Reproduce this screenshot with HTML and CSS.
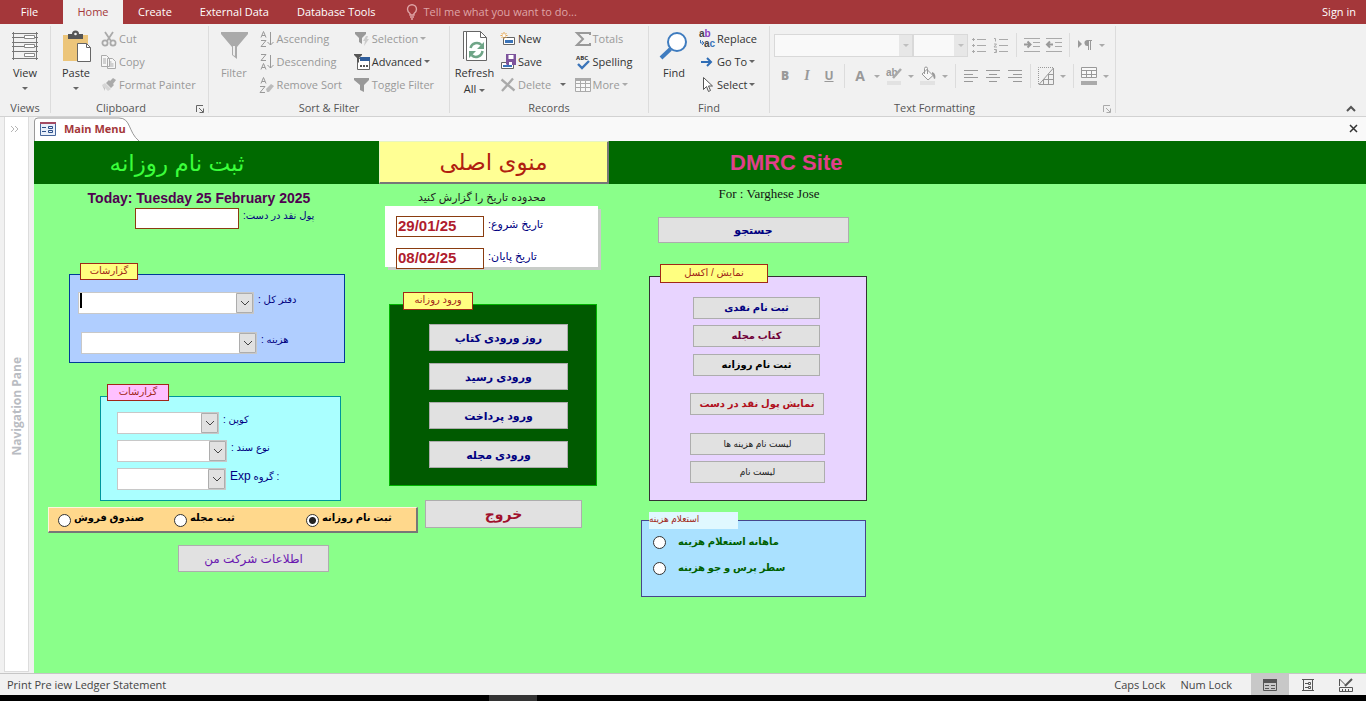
FILE: index.html
```
<!DOCTYPE html>
<html lang="en">
<head>
  <meta charset="UTF-8" />
  <meta name="viewport" content="width=device-width, initial-scale=1.0" />
  <title>Main Menu</title>
  <link rel="stylesheet" href="styles.css">
</head>
<body>
  <nav class="tabs">
    <button class="tab tab-file">File</button>
    <button class="tab active">Home</button>
    <button class="tab">Create</button>
    <button class="tab">External Data</button>
    <button class="tab">Database Tools</button>
    <button class="tab tell-me">
      <svg width="12" height="16" viewBox="0 0 12 16" fill="none" stroke="currentColor" stroke-width="1.4"><path d="M4 11V9.500C2.500 8.500 1.500 7.200 1.500 5.300a4.500 4.500 0 0 1 9 0c0 1.900-1 3.200-2.500 4.200V11zM4 13h4M5 15h2"/></svg>
      Tell me what you want to do...
    </button>
    <button class="tab sign-in">Sign in</button>
  </nav>

  <div class="ribbon">
    <section class="group views">
      <div class="group-body">
        <button class="big">
          <svg width="32" height="32" viewBox="0 0 32 32" fill="none" stroke="#777"><path d="M4.500 2v28M27.500 2v28M3 3.500h26M3 7.500h26M3 12.500h26M3 16.500h26M3 21.500h26M3 28.500h26"/><path fill="#fff" d="M15.500 5.500h10v3h-10zM15.500 14.500h10v3h-10zM15.500 23.500h10v3h-10z" stroke="#888"/></svg>
          <span>View</span><i class="arrow"></i>
        </button>
      </div>
      <h2>Views</h2>
    </section>

    <section class="group clipboard">
      <div class="group-body">
        <button class="big">
          <svg width="32" height="32" viewBox="0 0 32 32"><path fill="#ecc57a" d="M3 5h25v26H3z"/><path fill="#555" d="M8 4h4a3.500 3.500 0 0 1 7 0h4v5H8z"/><circle cx="15.500" cy="4" r="1.300" fill="#f1f1f1"/><path fill="#fff" stroke="#666" d="M17.500 13.500h9l4 4v14h-13z"/><path d="M26.500 13.500v4h4" fill="none" stroke="#666"/></svg>
          <span>Paste</span><i class="arrow"></i>
        </button>
        <div class="col">
          <button class="cmd" disabled><svg width="16" height="16" viewBox="0 0 16 16" fill="none" stroke="#aaa" stroke-width="1.800"><path d="M4 1l6 9M12 1L6 10"/><circle cx="4" cy="12" r="2.600"/><circle cx="12" cy="12" r="2.600"/></svg>Cut</button>
          <button class="cmd" disabled><svg width="16" height="16" viewBox="0 0 16 16" fill="#f6f6f6" stroke="#aaa"><path d="M.5 1.500h5l3 3v8h-8zM6.500 4.500h5l3 3v7h-8z"/><path d="M2 5h3M2 7h3M2 9h3M8.500 8h2M8.500 10h4M8.500 12h4"/></svg>Copy</button>
          <button class="cmd" disabled><svg width="16" height="16" viewBox="0 0 16 16"><path fill="#aaa" d="M12 1l3 2-3 4 1 1-3 3-5-5 3-3 1 1z"/><path fill="#d6d6d6" d="M4 6l6 6-3 2-6-6z"/><path fill="#c2c2c2" d="M1 8l3 3v3z"/></svg>Format Painter</button>
        </div>
      </div>
      <h2>Clipboard</h2>
      <button class="launcher" aria-label="Clipboard options"><svg width="8" height="8" viewBox="0 0 8 8" fill="none" stroke="currentColor"><path d="M.5 7V.5H7M3 3l4 4M7.500 3.500v4h-4"/></svg></button>
    </section>

    <section class="group sort">
      <div class="group-body">
        <button class="big" disabled>
          <svg width="32" height="32" viewBox="0 0 32 32"><path fill="#aaa" d="M3 2h27v2L19 17v12l-5-4v-8L3 4z"/><path fill="#eee" d="M15 16h2v10l-2-1z"/></svg>
          <span>Filter</span>
        </button>
        <div class="col">
          <button class="cmd" disabled><svg width="16" height="16" viewBox="0 0 16 16" fill="none" stroke="#999"><path d="M2 6.500L4.500.5 7 6.500M3 4.500h3M2 9.500h5l-5 6h5M11.500 1v13M8.500 11l3 3 3-3"/></svg>Ascending</button>
          <button class="cmd" disabled><svg width="16" height="16" viewBox="0 0 16 16" fill="none" stroke="#999"><path d="M2 .5h5l-5 6h5M2 15.500l2.500-6 2.500 6M3 13.500h3M11.500 1v13M8.500 11l3 3 3-3"/></svg>Descending</button>
          <button class="cmd" disabled><svg width="16" height="16" viewBox="0 0 16 16" fill="none" stroke="#999"><path d="M2 6.500L4.500.5 7 6.500M3 4.500h3M1 9.500h5l-5 6h5"/><path fill="#bbb" stroke="none" d="M7 12l5-5 3 2-5 6H8z"/></svg>Remove Sort</button>
        </div>
        <div class="col">
          <button class="cmd" disabled><svg width="16" height="16" viewBox="0 0 16 16"><path fill="#999" d="M1 1h11v2L8 7v6L5 11V7L1 3z"/><path fill="#ccc" d="M12 5L9 10h2l-1 5 5-7h-2l1-3z"/></svg>Selection<i class="arrow"></i></button>
          <button class="cmd"><svg width="16" height="16" viewBox="0 0 16 16"><path fill="#fff" stroke="#666" d="M3.500 4.500h12v11h-12z"/><path fill="#2f5d9b" d="M6 3h10v4H6z"/><path fill="#555" d="M0 0h8v1L5 4v5L3 7V4L0 1zM6 11h2v2H6zM9 11h2v2H9zM12 11h2v2h-2z"/></svg>Advanced<i class="arrow"></i></button>
          <button class="cmd" disabled><svg width="16" height="16" viewBox="0 0 16 16"><path fill="#999" d="M0 1h15v2l-5 5v7l-4-2V8L0 3z"/></svg>Toggle Filter</button>
        </div>
      </div>
      <h2>Sort &amp; Filter</h2>
    </section>

    <section class="group records">
      <div class="group-body">
        <button class="big">
          <svg width="32" height="32" viewBox="0 0 32 32" fill="#fff" stroke="#666"><path d="M4.500 29V1.500H18"/><path d="M7.500 1.500h14l6 6v23h-20z"/><path d="M21.500 1.500v6h6" fill="none"/><path d="M11.500 18a6.500 6.500 0 0 1 11-3M23.500 21a6.500 6.500 0 0 1-11 4" fill="none" stroke="#6fa587" stroke-width="2.500"/><path fill="#6fa587" stroke="none" d="M25 12v7h-7zM10 28v-7h7z"/></svg>
          <span>Refresh<br>All <i class="arrow"></i></span>
        </button>
        <div class="col">
          <button class="cmd"><svg width="16" height="16" viewBox="0 0 16 16"><path fill="#fff" stroke="#666" d="M3.500 6.500h11v7h-11z"/><path fill="#3b74b9" d="M5 9h8v3H5z"/><path stroke="#e8a54b" fill="none" d="M4 1v7M.5 4.500h7M1.500 2l5 5M6.500 2l-5 5"/><circle cx="4" cy="4.500" r="1.500" fill="#fff"/></svg>New</button>
          <button class="cmd"><svg width="16" height="16" viewBox="0 0 16 16"><path fill="#fff" stroke="#666" d="M1.500 8.500h12v6h-12z"/><path fill="#3b74b9" d="M3 11h9v2H3z"/><path fill="#7d549c" d="M6 0h10v11H7L6 10z"/><path fill="#fff" d="M8.500 1h5v4h-5zM9 8h3v3H9z"/></svg>Save</button>
          <button class="cmd" disabled><svg width="16" height="16" viewBox="0 0 16 16"><path fill="none" stroke="#aaa" stroke-width="2.300" d="M1.500 2.500l13 11M13 1.500L2 14"/></svg>Delete<i class="arrow dark"></i></button>
        </div>
        <div class="col">
          <button class="cmd" disabled><svg width="16" height="16" viewBox="0 0 16 16"><path fill="none" stroke="#999" stroke-width="2" d="M15 4V2H2l6 6-6 6h13v-2"/></svg>Totals</button>
          <button class="cmd"><svg width="16" height="16" viewBox="0 0 16 16"><text x="1" y="6" class="icon-abc">ABC</text><path fill="none" stroke="#3b74b9" stroke-width="2.400" d="M3 10l4 4 7-7"/></svg>Spelling</button>
          <button class="cmd" disabled><svg width="16" height="16" viewBox="0 0 16 16"><path fill="#f8f8f8" stroke="#aaa" d="M.5 1.500h15v13H.5zM.5 10.500h15M5.500 2v13M10.500 2v13M.5 6.500h15"/><path fill="#aaa" d="M0 1h16v3H0z"/></svg>More<i class="arrow"></i></button>
        </div>
      </div>
      <h2>Records</h2>
    </section>

    <section class="group find">
      <div class="group-body">
        <button class="big">
          <svg width="32" height="32" viewBox="0 0 32 32"><circle cx="19" cy="12" r="9" fill="#fff" stroke="#3f7cbf" stroke-width="2"/><path stroke="#3f7cbf" stroke-width="4" d="M12.500 19L3 28"/></svg>
          <span>Find</span>
        </button>
        <div class="col">
          <button class="cmd"><svg width="16" height="20" viewBox="0 0 16 20"><text x="0" y="8" class="icon-ab">a<tspan fill="#8a3fc0">b</tspan></text><text x="5" y="18" class="icon-ab">a<tspan fill="#3b74b9">c</tspan></text><path d="M1.500 11v3h3M3 12l2 2-2 2" fill="none" stroke="#3b74b9"/></svg>Replace</button>
          <button class="cmd"><svg width="16" height="16" viewBox="0 0 16 16"><path fill="none" stroke="#2f6db5" stroke-width="2" d="M2 8h10M8 4l4 4-4 4"/></svg>Go To<i class="arrow"></i></button>
          <button class="cmd"><svg width="16" height="16" viewBox="0 0 16 16"><path fill="#fff" stroke="#555" d="M4.500.5v12l3-3 2 5 2-1-2-4.500h4z"/></svg>Select<i class="arrow"></i></button>
        </div>
      </div>
      <h2>Find</h2>
    </section>

    <section class="group format">
      <div class="format-row">
        <select class="font-name" aria-label="Font" disabled></select>
        <select class="font-size" aria-label="Font size" disabled></select>
        <button class="tool" disabled aria-label="Bullets"><svg width="14" height="16" viewBox="0 0 14 16"><path d="M5 2.500h9M5 8.500h9M5 14.500h9M0 2.500h3M0 8.500h3M0 14.500h3" stroke="#aaa"/><path d="M1.500 1v3M1.500 7v3M1.500 13v3" stroke="#aaa"/></svg></button>
        <button class="tool" disabled aria-label="Numbering"><svg width="14" height="16" viewBox="0 0 14 16" fill="none" stroke="#aaa"><path d="M5 2.500h9M5 8.500h9M5 14.500h9M0 1.500h1.500v3M0 7h2.500L0 10h3M0 12.500h2.500v3H0M1 14h1.500"/></svg></button>
        <span class="sep"></span>
        <button class="tool" disabled aria-label="Increase indent"><svg width="16" height="16" viewBox="0 0 16 16" fill="none" stroke="#999"><path d="M0 1.500h16M9 5.500h7M9 9.500h7M0 14.500h16" stroke="#aaa"/><path stroke-width="2" d="M0 7.500h6M3.500 4.500l3 3-3 3"/></svg></button>
        <button class="tool" disabled aria-label="Decrease indent"><svg width="16" height="16" viewBox="0 0 16 16" fill="none" stroke="#999"><path d="M0 1.500h16M9 5.500h7M9 9.500h7M0 14.500h16" stroke="#aaa"/><path stroke-width="2" d="M1 7.500h6M4 4.500l-3 3 3 3"/></svg></button>
        <span class="sep"></span>
        <button class="tool" disabled aria-label="Text direction"><svg width="14" height="12" viewBox="0 0 14 12" fill="#999"><path d="M0 1l4 4-4 4zM9 1h5v1h-1v9h-1V2h-1v9h-1V7a3 3 0 0 1-1-6z"/></svg></button>
        <span class="drop"><i class="arrow"></i></span>
      </div>
      <div class="format-row">
        <button class="tool" disabled><b>B</b></button>
        <button class="tool italic" disabled>I</button>
        <button class="tool underline" disabled>U</button>
        <span class="sep"></span>
        <button class="tool font-colour" disabled>A</button>
        <span class="drop"><i class="arrow"></i></span>
        <button class="tool" disabled aria-label="Highlight"><svg width="16" height="20" viewBox="0 0 16 20"><text x="0" y="10" class="icon-hl">ab</text><path stroke="#aaa" stroke-width="2.500" d="M15 3l-8 9"/><path fill="#e2e2e2" d="M1 15h14v4H1z"/></svg></button>
        <span class="drop"><i class="arrow"></i></span>
        <button class="tool" disabled aria-label="Fill"><svg width="16" height="20" viewBox="0 0 16 20"><path fill="#f8f8f8" stroke="#999" d="M7 3.500l6 6-5 4.500-6-6zM4.500 8V2.500a1.500 1.500 0 0 1 3 0V8"/><path fill="#999" d="M12 6c3 1 4 4 3 7-2 0-1-3-3-5z"/><path fill="#e2e2e2" d="M0 15h15v4H0z"/></svg></button>
        <span class="drop"><i class="arrow"></i></span>
        <span class="sep"></span>
        <button class="tool" disabled aria-label="Align left"><svg width="14" height="14" viewBox="0 0 14 14" stroke="#999"><path d="M0 1.500h14M0 5.500h9M0 8.500h14M0 12.500h9"/></svg></button>
        <button class="tool" disabled aria-label="Centre"><svg width="14" height="14" viewBox="0 0 14 14" stroke="#999"><path d="M0 1.500h14M3 5.500h8M0 8.500h14M3 12.500h8"/></svg></button>
        <button class="tool" disabled aria-label="Align right"><svg width="14" height="14" viewBox="0 0 14 14" stroke="#999"><path d="M0 1.500h14M5 5.500h9M0 8.500h14M5 12.500h9"/></svg></button>
        <span class="sep"></span>
        <button class="tool" disabled aria-label="Gridlines"><svg width="16" height="18" viewBox="0 0 16 18" fill="none" stroke="#999"><path stroke-dasharray="1 1" d="M.5 17V.5H15"/><path d="M1 17.500h14.500V1zM5.500 12v5M10.500 7v10M6 12.500h9M10 7.500h5"/></svg></button>
        <span class="drop"><i class="arrow"></i></span>
        <span class="sep"></span>
        <button class="tool" disabled aria-label="Alternate row colour"><svg width="16" height="18" viewBox="0 0 16 18"><path fill="#f8f8f8" stroke="#999" d="M.5.5h15v10H.5zM.5 3.500h15M.5 7.500h15M5.500 3v8M10.500 3v8"/><path fill="#aaa" d="M0 14h16v4H0z"/></svg></button>
        <span class="drop"><i class="arrow"></i></span>
      </div>
      <h2>Text Formatting</h2>
      <button class="launcher" disabled aria-label="Text formatting options"><svg width="8" height="8" viewBox="0 0 8 8" fill="none" stroke="currentColor"><path d="M.5 7V.5H7M3 3l4 4M7.500 3.500v4h-4"/></svg></button>
    </section>
    <button class="collapse" aria-label="Collapse the ribbon"><svg width="10" height="7" viewBox="0 0 10 7"><path fill="none" stroke="#555" stroke-width="2" d="M1 6l4-4 4 4"/></svg></button>
  </div>

  <div class="workspace">
    <aside class="nav-pane">
      <button class="expand" aria-label="Open navigation pane"><svg width="9" height="8" viewBox="0 0 9 8"><path fill="none" stroke="#b5b5b5" d="M1 1l3 3-3 3M5 1l3 3-3 3"/></svg></button>
      <span class="nav-title">Navigation Pane</span>
    </aside>

    <div class="document">
      <div class="doc-tabs">
        <button class="doc-tab">
          <svg class="tab-shape" width="106" height="24" viewBox="0 0 106 24"><path fill="#fff" stroke="#999" d="M.5 24V4Q.5 1 4 1h81c12 0 9 14 20 23"/></svg>
          <svg class="form-icon" width="16" height="14" viewBox="0 0 16 14"><path fill="#e8effa" stroke="#47679b" d="M.5.500h15v13H.5z"/><path fill="#a34a63" d="M0 0h16v2H0z"/><path stroke="#2c5089" fill="none" d="M2 5.500h4M2 9.500h4M8.500 4.500h4v2h-4zM8.500 8.500h4v2h-4z"/></svg>
          <span>Main Menu</span>
        </button>
        <button class="doc-close" aria-label="Close"><svg width="9" height="9" viewBox="0 0 9 9"><path stroke="#333" stroke-width="1.500" d="M1 1l7 7M8 1L1 8"/></svg></button>
      </div>

      <main class="form">
        <header class="form-header">
          <h1 class="daily" lang="fa">ثبت نام روزانه</h1>
          <div class="main-title" lang="fa" dir="rtl">منوی اصلی</div>
          <div class="site">DMRC Site</div>
        </header>

        <div class="form-body">
          <div class="left-col">
            <p class="today">Today: Tuesday 25 February 2025</p>
            <div class="field cash">
              <input type="text" id="cash" class="box">
              <label for="cash" dir="rtl">پول نقد در دست:</label>
            </div>

            <fieldset class="panel ledger">
              <legend dir="rtl">گزارشات</legend>
              <div class="field">
                <select id="ledger" class="combo"></select>
                <span class="caret"></span>
                <label for="ledger" dir="rtl">دفتر کل :</label>
              </div>
              <div class="field">
                <select id="expense" class="combo"></select>
                <label for="expense" dir="rtl">هزینه :</label>
              </div>
            </fieldset>

            <fieldset class="panel vouchers">
              <legend dir="rtl">گزارشات</legend>
              <div class="field">
                <select id="coupon" class="combo coupon"></select>
                <label for="coupon" dir="rtl">کوپن :</label>
              </div>
              <div class="field">
                <select id="doc-type" class="combo doc-type"></select>
                <label for="doc-type" dir="rtl">نوع سند :</label>
              </div>
              <div class="field">
                <select id="exp-group" class="combo exp-group"></select>
                <label for="exp-group"><span class="latin">Exp</span> گروه :</label>
              </div>
            </fieldset>

            <div class="options">
              <label><input type="radio" name="book"><span>صندوق فروش</span></label>
              <label><input type="radio" name="book"><span>ثبت مجله</span></label>
              <label><input type="radio" name="book" checked><span>ثبت نام روزانه</span></label>
            </div>

            <button class="btn company" dir="rtl">اطلاعات شرکت من</button>
          </div>

          <div class="mid-col">
            <p class="range-title" dir="rtl">محدوده تاریخ را گزارش کنید</p>
            <div class="range">
              <div class="field">
                <input type="text" id="from" class="box" value="29/01/25">
                <label for="from" dir="rtl">تاریخ شروع:</label>
              </div>
              <div class="field">
                <input type="text" id="to" class="box" value="08/02/25">
                <label for="to" dir="rtl">تاریخ پایان:</label>
              </div>
            </div>

            <fieldset class="panel entry">
              <legend dir="rtl">ورود روزانه</legend>
              <button class="btn" dir="rtl">روز ورودی کتاب</button>
              <button class="btn" dir="rtl">ورودی رسید</button>
              <button class="btn" dir="rtl">ورود پرداخت</button>
              <button class="btn" dir="rtl">ورودی مجله</button>
            </fieldset>

            <button class="btn exit" dir="rtl">خروج</button>
          </div>

          <div class="right-col">
            <p class="owner">For : Varghese Jose</p>
            <button class="btn search" dir="rtl">جستجو</button>

            <fieldset class="panel excel">
              <legend dir="rtl">نمایش / اکسل</legend>
              <button class="btn" dir="rtl">ثبت نام نقدی</button>
              <button class="btn maroon" dir="rtl">کتاب مجله</button>
              <button class="btn black" dir="rtl">ثبت نام روزانه</button>
              <button class="btn red" dir="rtl">نمایش پول نقد در دست</button>
              <button class="btn plain wide" dir="rtl">لیست نام هزینه ها</button>
              <button class="btn plain" dir="rtl">لیست نام</button>
            </fieldset>

            <fieldset class="panel query">
              <legend dir="rtl">استعلام هزینه</legend>
              <label><input type="radio" name="query"><span dir="rtl">ماهانه استعلام هزینه</span></label>
              <label><input type="radio" name="query"><span dir="rtl">سطر پرس و جو هزینه</span></label>
            </fieldset>
          </div>
        </div>
      </main>
    </div>
  </div>

  <footer class="status">
    <span class="status-text">Print Pre iew Ledger Statement</span>
    <span>Caps Lock</span>
    <span>Num Lock</span>
    <div class="view-switch">
      <button class="active" aria-label="Form view"><svg width="14" height="12" viewBox="0 0 14 12"><path fill="none" stroke="#555" d="M.5.5h13v11H.5zM2 6.500h4M2 9.500h4M8 6.500h4M8 9.500h4"/><path fill="#555" d="M0 0h14v4H0z"/></svg></button>
      <button aria-label="Layout view"><svg width="12" height="14" viewBox="0 0 12 14" fill="none" stroke="#555"><path d="M1.500 1v12M10.500 1v12M0 1.500h12M0 12.500h12M3 5.500h3M3 9.500h3M6.500 4.500h2v2h-2zM6.500 8.500h2v2h-2z"/></svg></button>
      <button aria-label="Design view"><svg width="14" height="14" viewBox="0 0 14 14" fill="none" stroke="#555"><path d="M.5 8V1l6 6M.5 9.500h13v4H.5zM3.500 11v2M6.500 11v2M9.500 11v2"/><path stroke-width="2" d="M13 1L6 8"/></svg></button>
    </div>
  </footer>
  <div class="taskbar"><span></span></div>
</body>
</html>
```
FILE: styles.css
```
* {
  box-sizing: border-box;
}

body {
  margin: 0;
  height: 100vh;
  display: flex;
  flex-direction: column;
  overflow: hidden;
  font-family: "Open Sans", "DejaVu Sans", sans-serif;
  font-size: 11px;
  line-height: 16px;
  color: #333;
  background: #f1f1f1;
}

button {
  font: inherit;
  color: inherit;
  padding: 0;
  border: none;
  background: none;
}

svg {
  flex: none;
  overflow: visible;
}

h1,
h2,
p {
  margin: 0;
  font-weight: normal;
}

/* ribbon tabs */
.tabs {
  display: flex;
  height: 24px;
  background: #a4373a;
  color: #fff;
}

.tab {
  padding: 0 14px;
}

.tab-file {
  width: 63px;
  padding: 0 4px 0 0;
}

.tab.active {
  width: 60px;
  margin-right: 1px;
  padding: 0;
  background: #f1f1f1;
  color: #a4373a;
}

.tell-me {
  display: flex;
  align-items: center;
  gap: 5px;
  padding-left: 17px;
  color: #dfa5a7;
}

.sign-in {
  margin-left: auto;
  padding: 0 10px;
}

/* ribbon */
.ribbon {
  display: flex;
  height: 93px;
  border-bottom: 1px solid #d2d2d2;
}

.group {
  position: relative;
  display: flex;
  flex-direction: column;
  margin: 2px 0 3px;
  padding-top: 1px;
  border-right: 1px solid #dcdcdc;
}

.group h2 {
  margin-top: auto;
  font-size: 11px;
  line-height: 10px;
  text-align: center;
  color: #555;
}

.views {
  width: 51px;
}

.clipboard {
  width: 158px;
}

.clipboard h2 {
  padding-right: 17px;
}

.sort {
  width: 241px;
}

.records {
  width: 199px;
}

.find {
  width: 121px;
}

.format {
  width: 346px;
  padding: 7px 0 0 4px;
}

.group-body {
  display: flex;
  height: 69px;
}

.big {
  width: 50px;
  display: flex;
  flex-direction: column;
  align-items: center;
  padding-top: 3px;
}

.big span {
  margin-top: 3px;
  white-space: nowrap;
}

.big > .arrow {
  margin-top: 6px;
}

.col {
  display: flex;
  flex-direction: column;
}

.sort .col {
  width: 96px;
}

.records .col {
  width: 75px;
  margin-left: 1px;
}

.cmd {
  display: flex;
  align-items: center;
  gap: 2px;
  height: 23px;
  white-space: nowrap;
}

button:disabled {
  color: #999;
}

.arrow {
  display: inline-block;
  flex: none;
  border: 3px solid transparent;
  border-top-color: #666;
  border-bottom: none;
  vertical-align: middle;
}

:disabled .arrow,
.drop .arrow {
  border-top-color: #aaa;
}

:disabled .arrow.dark {
  margin-left: 7px;
  border-top-color: #666;
}

.launcher {
  position: absolute;
  right: 4px;
  bottom: 0;
  color: #666;
  line-height: 8px;
}

.launcher:disabled {
  color: #aaa;
}

.icon-abc {
  font: bold 6px "Open Sans", sans-serif;
  fill: #333;
}

.icon-ab {
  font: bold 10px "Liberation Sans", sans-serif;
  fill: #444;
}

.icon-hl {
  font: bold 10px "Liberation Sans", sans-serif;
  fill: #999;
}

.format-row {
  display: flex;
  align-items: center;
  height: 24px;
  margin-bottom: 7px;
}

.format h2 {
  padding-right: 20px;
}

.font-name,
.font-size {
  appearance: none;
  height: 23px;
  border: 1px solid #d0d0d0;
  border-radius: 0;
  background: #fdfdfd right / 13px 21px no-repeat;
  background-image: url("data:image/svg+xml,%3Csvg xmlns='http://www.w3.org/2000/svg' width='13' height='21'%3E%3Cpath fill='%23e3e3e3' d='M0 0h13v21H0z'/%3E%3Cpath fill='%23aaa' d='M4 9h6l-3 3z'/%3E%3C/svg%3E");
}

.font-name {
  width: 139px;
}

.font-size {
  width: 55px;
}

.tool {
  width: 22px;
  height: 22px;
  display: flex;
  align-items: center;
  justify-content: center;
  font-size: 12px;
  font-weight: bold;
}

.italic {
  font-family: "Liberation Serif", serif;
  font-size: 14px;
  font-style: italic;
}

.underline {
  text-decoration: underline;
}

.font-colour {
  font-size: 14px;
}

.drop {
  width: 12px;
  display: flex;
  justify-content: center;
}

.sep {
  width: 1px;
  height: 24px;
  margin: 0 4px;
  background: #dcdcdc;
}

.collapse {
  margin: auto 10px 0 auto;
}

/* workspace */
.workspace {
  flex: 1;
  min-height: 0;
  display: flex;
}

.nav-pane {
  width: 25px;
  margin: 0 5px 1px 4px;
  display: flex;
  flex-direction: column;
  align-items: center;
  background: #fff;
  border: 1px solid #dcdcdc;
  border-top: none;
}

.expand {
  margin: 4px 5px 0 0;
}

.nav-title {
  margin-top: 220px;
  writing-mode: vertical-rl;
  transform: rotate(180deg);
  font-size: 12px;
  font-weight: bold;
  line-height: 18px;
  color: #b9bcc2;
}

.document {
  flex: 1;
  min-width: 0;
  display: flex;
  flex-direction: column;
}

.doc-tabs {
  display: flex;
  justify-content: space-between;
  height: 24px;
  padding-right: 8px;
  background: #f9f9f9;
}

.doc-tab {
  position: relative;
  display: flex;
  align-items: center;
  gap: 8px;
  padding-left: 6px;
  color: #a4373a;
  font-weight: bold;
}

.tab-shape {
  position: absolute;
  left: 0;
  top: 0;
}

.form-icon,
.doc-tab span {
  position: relative;
}

.form {
  flex: 1;
  background: #8aff8a;
  font-family: "Liberation Sans", "DejaVu Sans", sans-serif;
}

.form-header {
  display: grid;
  grid-template-columns: 345px 230px 1fr;
  height: 43px;
  align-items: center;
  background: #006a00;
}

.daily {
  font-size: 23px;
  line-height: 32px;
  color: #3bff3b;
  direction: rtl;
  text-align: center;
  padding-right: 59px;
}

.main-title {
  height: 43px;
  border: 1px solid #e8f5c0;
  border-right: 2px solid #777;
  border-bottom: 2px solid #777;
  background: #ffff94;
  color: #b02010;
  font-size: 23px;
  line-height: 40px;
  text-align: center;
}

.site {
  padding-left: 121px;
  font-size: 22px;
  font-weight: bold;
  color: #e0408a;
}

.form-body {
  display: grid;
  grid-template-columns: 345px 262px 226px;
}

.left-col,
.mid-col,
.right-col {
  display: flex;
  flex-direction: column;
  align-items: flex-start;
}

.field {
  display: flex;
  align-items: flex-start;
  gap: 4px;
  font-size: 10px;
  color: #000080;
}

.field label {
  white-space: nowrap;
}

.latin {
  font-size: 12px;
}

.box {
  width: 104px;
  height: 21px;
  padding: 0 1px 2px;
  border: 1px solid #8a3c10;
  border-radius: 0;
  background: #fff;
  font: bold 15px "Liberation Sans", sans-serif;
  color: #b01c2e;
}

.combo {
  appearance: none;
  height: 22px;
  border: 1px solid #c8c8c8;
  border-radius: 0;
  background: #fff right / 17px 20px no-repeat;
  background-image: url("data:image/svg+xml,%3Csvg xmlns='http://www.w3.org/2000/svg' width='17' height='20'%3E%3Cpath fill='%23e1e1e1' stroke='%23adadad' d='M.5.5h16v19H.5z'/%3E%3Cpath fill='none' stroke='%23444' d='M5 8l4 4 4-4'/%3E%3C/svg%3E");
}

.panel {
  position: relative;
  min-width: 0;
  margin: 0;
  padding: 0;
  border: 1px solid;
}

.panel legend {
  position: absolute;
  padding: 0;
  height: 17px;
  border: 1px solid #a02818;
  background: #ffff80;
  color: #a02818;
  font-size: 10px;
  line-height: 14px;
  text-align: center;
  white-space: nowrap;
}

.btn {
  height: 27px;
  border: 1px solid #adadad;
  background: #e1e1e1;
  color: #000080;
  font-size: 11px;
  font-weight: bold;
  line-height: 20px;
  white-space: nowrap;
}

input[type="radio"] {
  appearance: none;
  flex: none;
  width: 13px;
  height: 13px;
  margin: 0;
  border: 1px solid #333;
  border-radius: 50%;
  background: #fff;
}

input[type="radio"]:checked {
  background: radial-gradient(#222 0 3px, #fff 4px);
}

/* left column */
.today {
  width: 330px;
  margin-top: 4px;
  font-size: 14px;
  font-weight: bold;
  line-height: 20px;
  text-align: center;
  color: #500050;
}

.cash {
  margin-left: 101px;
}

.ledger {
  width: 276px;
  height: 89px;
  margin: 45px 0 0 35px;
  padding: 17px 8px;
  border-color: #003c96;
  background: #b0ceff;
}

.ledger legend {
  top: -12px;
  left: 10px;
  width: 58px;
}

.ledger .combo {
  width: 176px;
}

.ledger .field {
  position: relative;
}

.ledger .field + .field {
  margin: 18px 0 0 3px;
}

.caret {
  position: absolute;
  left: 2px;
  top: 1px;
  width: 2px;
  height: 15px;
  background: #000;
}

.vouchers {
  width: 241px;
  height: 105px;
  margin: 33px 0 0 66px;
  padding: 15px 16px;
  border-color: #00969b;
  background: #aaffff;
}

.vouchers legend {
  top: -13px;
  left: 6px;
  width: 62px;
  background: #ffc0ff;
}

.vouchers .field + .field {
  margin-top: 6px;
}

.coupon {
  width: 102px;
}

.doc-type {
  width: 110px;
}

.exp-group {
  width: 109px;
}

.options {
  display: grid;
  grid-template-columns: 116px 132px 1fr;
  width: 370px;
  height: 26px;
  margin: 6px 0 0 14px;
  padding-left: 9px;
  border: 1px solid #fff4dc;
  border-right: 2px solid #777;
  border-bottom: 2px solid #777;
  background: #ffd88c;
}

.options label,
.query label {
  display: flex;
  gap: 4px;
  color: #000;
  font-weight: bold;
}

.options label {
  gap: 3px;
  font-size: 10px;
}

.options input {
  margin-top: 6px;
}

.options span {
  margin-top: 2px;
}

.company {
  width: 151px;
  margin: 12px 0 0 144px;
  color: #6a18b0;
  font-size: 12px;
  font-weight: normal;
}

/* middle column */
.range-title {
  width: 206px;
  margin-top: 4px;
  font-size: 11px;
  line-height: 18px;
  text-align: center;
  color: #222;
}

.range {
  width: 213px;
  height: 61px;
  margin-left: 6px;
  padding: 10px 11px;
  background: #fff;
  box-shadow: 3px 3px 0 #c8ccc8;
}

.range .box {
  width: 88px;
}

.range .field {
  font-size: 11px;
}

.range .field + .field {
  margin-top: 11px;
}

.entry {
  width: 208px;
  height: 182px;
  display: flex;
  flex-direction: column;
  margin: 37px 0 0 10px;
  padding: 19px 28px 0 39px;
  border-color: #00b400;
  background: #005a00;
}

.entry legend {
  top: -13px;
  left: 13px;
  width: 70px;
  height: 18px;
}

.entry .btn {
  margin-bottom: 12px;
}

.exit {
  width: 157px;
  height: 28px;
  margin: 14px 0 0 46px;
  color: #a0102c;
  font-size: 14px;
}

/* right column */
.owner {
  width: 256px;
  margin-top: 2px;
  font-family: "Liberation Serif", serif;
  font-size: 13px;
  text-align: center;
  color: #111;
}

.search {
  width: 191px;
  height: 26px;
  margin: 15px 0 0 17px;
}

.excel {
  width: 218px;
  height: 225px;
  display: flex;
  flex-direction: column;
  gap: 6px;
  margin: 33px 0 0 8px;
  padding: 20px 41px 0 40px;
  border-color: #333;
  background: #e8d4ff;
}

.excel legend {
  top: -13px;
  left: 10px;
  width: 108px;
  height: 19px;
  line-height: 16px;
}

.excel .btn {
  height: 22px;
  margin: 0 5px 0 3px;
  font-size: 10px;
  line-height: 16px;
}

.excel .maroon {
  color: #700038;
}

.excel .black {
  margin-top: 1px;
  color: #000;
}

.excel .red {
  margin: 11px 1px 0 0;
  color: #b01020;
}

.excel .plain {
  margin: 0;
  color: #222;
  font-size: 9px;
  font-weight: normal;
}

.excel .wide {
  margin-top: 12px;
}

.query {
  width: 225px;
  height: 77px;
  margin-top: 19px;
  padding: 12px 11px;
  border-color: #46468c;
  background: #aae1ff;
}

.query legend {
  top: -9px;
  left: 7px;
  width: 89px;
  border: none;
  background: #e0f8ff;
  font-size: 9px;
  text-align: left;
}

.query label {
  align-items: center;
  gap: 12px;
  height: 18px;
  margin-bottom: 8px;
  color: #006000;
  font-size: 10px;
}

/* status bar */
.status {
  display: flex;
  align-items: center;
  gap: 15px;
  height: 22px;
  padding: 0 1px 0 7px;
  border-top: 1px solid #c6c6c6;
  color: #444;
}

.status-text {
  margin-right: auto;
}

.view-switch {
  display: flex;
  align-self: stretch;
  margin-left: 4px;
}

.view-switch button {
  width: 38px;
  display: flex;
  align-items: center;
  justify-content: center;
}

.view-switch .active {
  background: #c8c8c8;
}

.taskbar {
  display: flex;
  height: 6px;
  padding-left: 489px;
  background: #000;
}

.taskbar span {
  width: 48px;
  background: #333;
}
```
